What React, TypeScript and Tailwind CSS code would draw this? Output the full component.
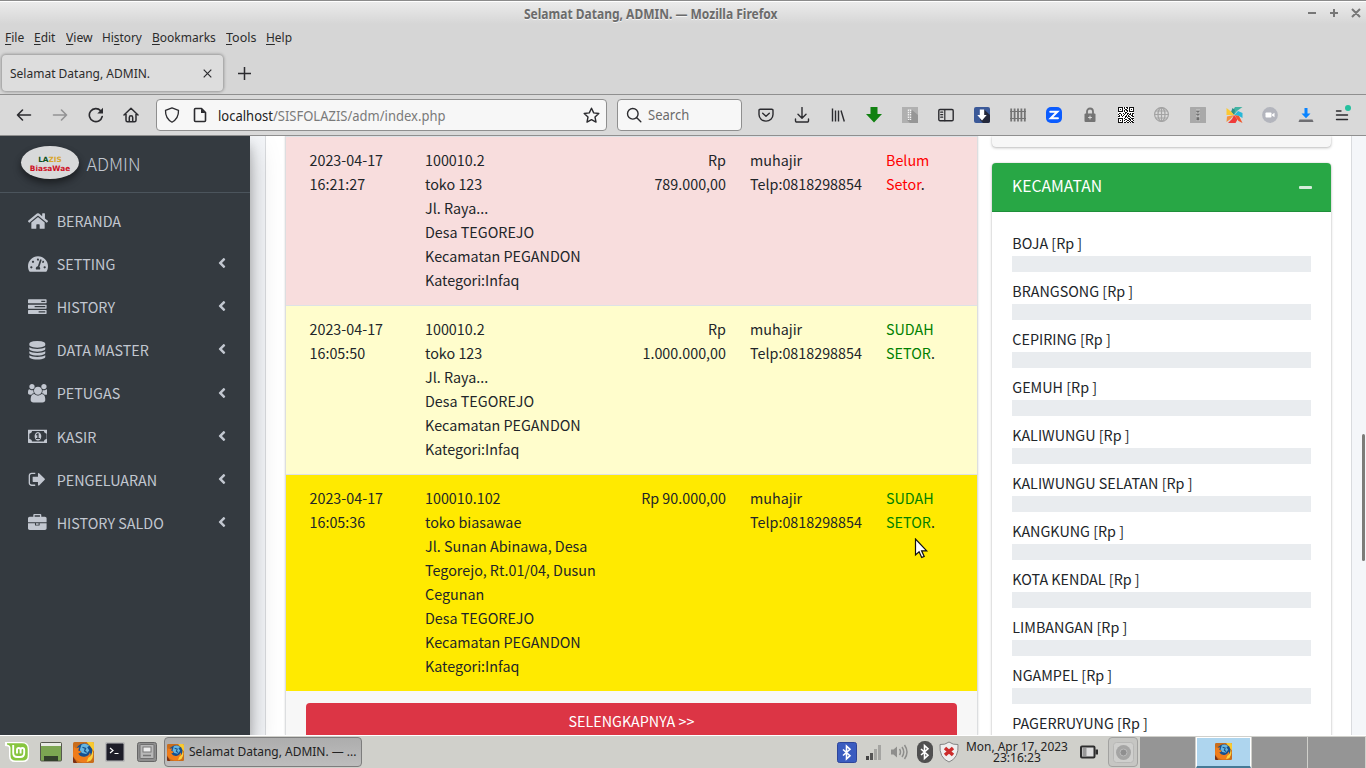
import { useLayoutEffect, useRef, useState, type ReactNode } from 'react';
import { FaHome, FaTachometerAlt, FaAngleLeft } from 'react-icons/fa';

/* Text of the desktop theme, condensed to a given width. */
function Label({ w, className = '', children }: { w: number; className?: string; children: ReactNode }) {
  const ref = useRef<HTMLSpanElement>(null);
  const [k, setK] = useState(1);
  useLayoutEffect(() => {
    if (ref.current) setK(w / ref.current.offsetWidth);
  }, [w]);
  return (
    <span className={'block whitespace-nowrap ' + className} style={{ width: w }}>
      <span ref={ref} className="inline-block origin-left" style={{ transform: `scaleX(${k})` }}>
        {children}
      </span>
    </span>
  );
}

const FA4: Record<string, { w: number; d: string }> = {
  tasks: { w: 1792, d: 'M1024 1408h640v-128h-640v128zm-384-512h1024v-128h-1024v128zm640-512h384v-128h-384v128zm512 832v256q0 26-19 45t-45 19h-1664q-26 0-45-19t-19-45v-256q0-26 19-45t45-19h1664q26 0 45 19t19 45zm0-512v256q0 26-19 45t-45 19h-1664q-26 0-45-19t-19-45v-256q0-26 19-45t45-19h1664q26 0 45 19t19 45zm0-512v256q0 26-19 45t-45 19h-1664q-26 0-45-19t-19-45v-256q0-26 19-45t45-19h1664q26 0 45 19t19 45z' },
  database: { w: 1792, d: 'M896 768q237 0 443-43t325-127v170q0 69-103 128t-280 93.5-385 34.5-385-34.5-280-93.5-103-128v-170q119 84 325 127t443 43zm0 768q237 0 443-43t325-127v170q0 69-103 128t-280 93.5-385 34.5-385-34.5-280-93.5-103-128v-170q119 84 325 127t443 43zm0-384q237 0 443-43t325-127v170q0 69-103 128t-280 93.5-385 34.5-385-34.5-280-93.5-103-128v-170q119 84 325 127t443 43zm0-1152q208 0 385 34.5t280 93.5 103 128v128q0 69-103 128t-280 93.5-385 34.5-385-34.5-280-93.5-103-128v-128q0-69 103-128t280-93.5 385-34.5z' },
  users: { w: 1920, d: 'M593 896q-162 5-265 128h-134q-82 0-138-40.5t-56-118.5q0-353 124-353 6 0 43.5 21t97.5 42.5 119 21.5q67 0 133-23-5 37-5 66 0 139 81 256zm1071 637q0 120-73 189.5t-194 69.5h-874q-121 0-194-69.5t-73-189.5q0-53 3.5-103.5t14-109 26.5-108.5 43-97.5 62-81 85.5-53.5 111.5-20q10 0 43 21.5t73 48 107 48 135 21.5 135-21.5 107-48 73-48 43-21.5q61 0 111.5 20t85.5 53.5 62 81 43 97.5 26.5 108.5 14 109 3.5 103.5zm-1024-1277q0 106-75 181t-181 75-181-75-75-181 75-181 181-75 181 75 75 181zm704 384q0 159-112.5 271.5t-271.5 112.5-271.5-112.5-112.5-271.5 112.5-271.5 271.5-112.5 271.5 112.5 112.5 271.5zm576 225q0 78-56 118.5t-138 40.5h-134q-103-123-265-128 81-117 81-256 0-29-5-66 66 23 133 23 59 0 119-21.5t97.5-42.5 43.5-21q124 0 124 353zm-128-609q0 106-75 181t-181 75-181-75-75-181 75-181 181-75 181 75 75 181z' },
  money: { w: 1920, d: 'M768 1152h384v-96h-128v-448h-114l-148 137 77 80q42-37 55-57h2v288h-128v96zm512-256q0 70-21 142t-59.5 134-101.5 101-138 39-138-39-101.5-101-59.5-134-21-142 21-142 59.5-134 101.5-101 138-39 138 39 101.5 101 59.5 134 21 142zm512 256v-512q-106 0-181-75t-75-181h-1152q0 106-75 181t-181 75v512q106 0 181 75t75 181h1152q0-106 75-181t181-75zm128-832v1152q0 26-19 45t-45 19h-1792q-26 0-45-19t-19-45v-1152q0-26 19-45t45-19h1792q26 0 45 19t19 45z' },
  signout: { w: 1792, d: 'M704 1440q0 4 1 20t.5 26.5-3 23.5-10 19.5-20.5 6.5h-320q-119 0-203.5-84.5t-84.5-203.5v-704q0-119 84.5-203.5t203.5-84.5h320q13 0 22.5 9.5t9.5 22.5q0 4 1 20t.5 26.5-3 23.5-10 19.5-20.5 6.5h-320q-66 0-113 47t-47 113v704q0 66 47 113t113 47h312l11.5 1 11.5 3 8 5.5 7 9 2 13.5zm928-544q0 26-19 45l-544 544q-19 19-45 19t-45-19-19-45v-288h-448q-26 0-45-19t-19-45v-384q0-26 19-45t45-19h448v-288q0-26 19-45t45-19 45 19l544 544q19 19 19 45z' },
  briefcase: { w: 1792, d: 'M640 256h512v-128h-512v128zm1152 640v480q0 66-47 113t-113 47h-1472q-66 0-113-47t-47-113v-480h672v160q0 26 19 45t45 19h320q26 0 45-19t19-45v-160h672zm-768 0v128h-256v-128h256zm768-480v384h-1792v-384q0-66 47-113t113-47h352v-160q0-40 28-68t68-28h576q40 0 68 28t28 68v160h352q66 0 113 47t47 113z' },
};

function Fa4({ name }: { name: string }) {
  const { w, d } = FA4[name];
  return (
    <svg viewBox={`0 0 ${w} 1792`} fill="currentColor" width={(w / 1792) * 18.6} height={18.6}>
      <path d={d} />
    </svg>
  );
}

const MENU: [string, string, number][] = [
  ['', 'File', 19], ['', 'Edit', 21.5], ['', 'View', 26.5], ['Hi', 'story', 40], ['', 'Bookmarks', 64], ['', 'Tools', 30], ['', 'Help', 26],
];

const NAV: { label: string; icon: ReactNode; open?: boolean }[] = [
  { label: 'BERANDA', icon: <FaHome className="size-5" />, open: true },
  { label: 'SETTING', icon: <FaTachometerAlt className="size-5" /> },
  { label: 'HISTORY', icon: <Fa4 name="tasks" /> },
  { label: 'DATA MASTER', icon: <Fa4 name="database" /> },
  { label: 'PETUGAS', icon: <Fa4 name="users" /> },
  { label: 'KASIR', icon: <Fa4 name="money" /> },
  { label: 'PENGELUARAN', icon: <Fa4 name="signout" /> },
  { label: 'HISTORY SALDO', icon: <Fa4 name="briefcase" /> },
];

const ROWS = [
  { bg: 'bg-[#f8dddd]', time: '16:21:27', lines: ['100010.2', 'toko 123', 'Jl. Raya...', 'Desa TEGOREJO', 'Kecamatan PEGANDON', 'Kategori:Infaq'], rp: ['Rp', '789.000,00'], status: ['Belum', 'Setor'], color: 'text-[#ff0000]' },
  { bg: 'bg-[#fffdcc]', time: '16:05:50', lines: ['100010.2', 'toko 123', 'Jl. Raya...', 'Desa TEGOREJO', 'Kecamatan PEGANDON', 'Kategori:Infaq'], rp: ['Rp', '1.000.000,00'], status: ['SUDAH', 'SETOR'], color: 'text-[#008000]' },
  { bg: 'bg-[#ffea00]', time: '16:05:36', lines: ['100010.102', 'toko biasawae', 'Jl. Sunan Abinawa, Desa', 'Tegorejo, Rt.01/04, Dusun', 'Cegunan', 'Desa TEGOREJO', 'Kecamatan PEGANDON', 'Kategori:Infaq'], rp: ['Rp 90.000,00'], status: ['SUDAH', 'SETOR'], color: 'text-[#008000]' },
];

const KECAMATAN = ['BOJA', 'BRANGSONG', 'CEPIRING', 'GEMUH', 'KALIWUNGU', 'KALIWUNGU SELATAN', 'KANGKUNG', 'KOTA KENDAL', 'LIMBANGAN', 'NGAMPEL', 'PAGERRUYUNG'];

function S({ children, size = 16, className = '' }: { children: ReactNode; size?: number; className?: string }) {
  return (
    <svg width={size} height={size} viewBox={`0 0 ${size} ${size}`} fill="none" stroke="#2b2b2f" strokeWidth="1.4" strokeLinecap="round" strokeLinejoin="round" className={className}>
      {children}
    </svg>
  );
}

const QR = ['1111101011011111', '1000101001010001', '1010100110010101', '1000101011010001', '1111101001011111', '0000000110000000', '0110010101101011', '1001001001011010', '0101010010100110', '1100100110110011', '0000000101001000', '1111101000110111', '1000100110011010', '1010101001101001', '1000100010010110', '1111101101101011'];

const EXT: ReactNode[] = [
  <S><path d="M2.2 2.2h11.600a1.200 1.200 0 0 1 1.200 1.200v4.100a7 6.600 0 0 1-14 0v-4.100a1.200 1.200 0 0 1 1.200-1.200z" /><path d="M4.700 6.200 8 9.300l3.300-3.100" /></S>,
  <S><path d="M8 .5v10.500M4 7.300 8 11.300l4-4M1.500 12v1.800a1.200 1.200 0 0 0 1.200 1.200h10.600a1.200 1.200 0 0 0 1.200-1.200V12" /></S>,
  <S><path d="M2.500 1.500v13M5.500 3.500v11M8.500 3.500v11M11 3.500l3.300 11" strokeLinecap="butt" /></S>,
  <S><path d="M4.500 0h7v7H16l-8 8.500L0 7h4.500z" fill="#118111" stroke="none" /></S>,
  <S><path d="M0 0h16v16H0z" fill="#b0b0b0" stroke="none" /><path d="m10 3 6 5v8H8l-3-3z" fill="#969696" stroke="none" /><path d="M7.500 2.500v10.500" stroke="#f2f2f2" strokeWidth="3.400" strokeLinecap="butt" strokeDasharray="1.500 .8" /><path d="M7.500 2.500v10.500" stroke="#b0b0b0" strokeWidth=".8" strokeLinecap="butt" /></S>,
  <S><rect x=".8" y="2.500" width="14.400" height="11.200" rx="1.200" /><path d="M6.800 2.500v11.200M2.700 5.200h2M2.700 7.700h2M2.700 10.200h2" strokeWidth="1.200" /></S>,
  <S><rect width="16" height="16" rx="2" fill="#3b5998" stroke="none" /><path d="M10.200 2.500 16 8v6q0 2-2 2H9l-3-3z" fill="#24283a" stroke="none" /><path d="M5.800 2.500h4.400V8h2.500L8 13.500 3.300 8h2.500z" fill="#fff" stroke="none" /></S>,
  <S><path d="M1.200 1.500v13M4.600 1.500v13M8 1.500v13M11.400 1.500v13M14.800 1.500v13" stroke="#747474" strokeWidth="1.800" strokeLinecap="butt" /><path d="M0 4.500h16M0 11.500h16" stroke="#747474" strokeWidth="1" /></S>,
  <S><rect width="16" height="16" rx="5" fill="#0b5cff" stroke="none" /><path d="M4.300 4.700h7L4.800 11.300h7.100" stroke="#fff" strokeWidth="2.100" strokeLinejoin="miter" /></S>,
  <S><path d="M5 7V4.500a3 3 0 0 1 6 0V7" stroke="#747474" strokeWidth="1.800" /><rect x="2.500" y="6.500" width="11" height="8.500" rx="1" fill="#747474" stroke="none" /><path d="M8 9v3M6.500 10.500h3" stroke="#d8d8d8" strokeWidth="1" /></S>,
  <S><rect width="16" height="16" fill="#fff" stroke="none" />{QR.map((r, y) => r.split('').map((c, x) => (c === '1' ? <rect key={x + '-' + y} x={x} y={y} width="1" height="1" fill="#111" stroke="none" /> : null)))}</S>,
  <S><g stroke="#a3a3a3" strokeWidth="1.200"><circle cx="7.500" cy="7.500" r="6.900" /><ellipse cx="7.500" cy="7.500" rx="3.500" ry="6.900" /><path d="M7.500.5v14M.5 7.500h14M1.700 4h11.600M1.700 11h11.600" /></g></S>,
  <S><rect width="16" height="16" rx=".5" fill="#a9a9a9" stroke="none" /><path d="M8 2v12" stroke="#bcbcbc" strokeWidth="4" strokeLinecap="butt" /><path d="M6.500 4h3L8 5.500zM6.500 7h3L8 8.500zM7 10.500h2v2.500H7z" fill="#6d6d6d" stroke="#6d6d6d" strokeWidth=".5" /></S>,
  <S size={17}><g stroke="none"><path d="M8 8 6.500 4 9 0h7.500L11 4z" fill="#41b3a3" /><path d="M8 8 5 5l1.500-4L9 3z" fill="#2f8f87" /><path d="m8.500 8 3.500-4 4.500 2v5L13 9z" fill="#27b8d8" /><path d="m8.500 8 4.500 1 3.500 7-4-2z" fill="#f0562b" /><path d="m8 8 3.500 4.500L9.500 16H2l4-4z" fill="#ef3b3a" /><path d="M8 8 1 9.500.5 15l4-3z" fill="#f6913d" /><path d="M8 8 .5 8V1L5 4.500z" fill="#fbc933" /></g></S>,
  <S><circle cx="8" cy="8" r="7.900" fill="#b3b5bd" stroke="none" /><rect x="3.500" y="5.500" width="6" height="5" rx=".8" fill="#fff" stroke="none" /><path d="m10 7.500 2.500-1.800v4.600L10 8.500z" fill="#fff" stroke="none" /></S>,
  <S><path d="M6.500 1h3v5.500h3L8 11.300 3.500 6.500h3z" fill="#0a84ff" stroke="none" /><path d="M1.500 12.500h13l1 2.500H.5z" fill="#6e6e72" stroke="none" /></S>,
  <span className="relative block"><S><path d="M2.500 4h4.500M2.500 8h11M2.500 12.500h11" /></S><span className="absolute -top-[2px] left-[11px] size-[6px] rounded-full bg-[#25c19f]" /></span>,
];

function Firefox({ size }: { size: number }) {
  return (
    <svg width={size} height={size} viewBox="0 0 20 20">
      <rect width="20" height="20" rx="1.500" fill="#c96d1c" />
      <path d="M13 0h5.500A1.500 1.500 0 0 1 20 1.500V9z" fill="#f8c930" />
      <circle cx="10.500" cy="9.500" r="8" fill="#16508f" />
      <path d="M8 2.500q4-2 7.500 1l-2 1.500 2 3-3 3.500-4-1-2-3z" fill="#65b5e0" />
      <path d="M9 5l3 1-1 2.500 2 1.500" stroke="#174f8a" strokeWidth="1.200" fill="none" />
      <path d="M1 4q.5 2 2 2l3-1-1 3 3 1q-1 2-3 2 2 3.500 6 3t5-4q1.500 2 .5 4.500Q19 12 18.500 7q2 7-2 10.500T6 18.500 0 11z" fill="#ef7d1b" />
      <path d="M14.500 15q4-2.500 4-7.500 2 6-1.500 10l-4 1.500z" fill="#fbd23c" />
      <path d="m0 14 4 6H1.500A1.500 1.500 0 0 1 0 18.500z" fill="#7b2f13" />
    </svg>
  );
}

const BT = 'M3.500 5 10.500 11.200 7 14.500V1.500l3.500 3.300L3.500 11';

export default function App() {
  return (
    <div className="flex h-[768px] w-[1366px] flex-col overflow-hidden bg-[#d6d6d6] font-['Noto_Sans',sans-serif] text-[13.33px] leading-5 text-[#2b2b2b]">
      {/* Title bar */}
      <header className="flex h-6 shrink-0 items-center border-t border-[#8b8b8b] bg-gradient-to-b from-[#ececec] to-[#d6d6d6] shadow-[inset_0_1px_0_#fff]">
        <div className="flex flex-1 justify-end">
          <div className="w-[842px] pt-[2px]"><Label w={254} className="font-bold text-[#6b6b6b] [text-shadow:0_1px_0_#f4f4f4]">Selamat Datang, ADMIN. — Mozilla Firefox</Label></div>
        </div>
        <svg className="absolute top-[5px] left-[1304px]" width="60" height="16" fill="none" stroke="#777" strokeWidth="2"><path d="M4 8h8M26 8h8M30 4v8M48 4l8 8M56 4l-8 8" /></svg>
      </header>
      <nav className="flex h-[27px] shrink-0 items-center gap-[10px] pb-[2px] pl-[5px]">
        {MENU.map(([pre, word, w]) => (
          <Label key={word} w={w}>
            {pre}<span className="underline decoration-1 underline-offset-[2px]">{word[0]}</span>{word.slice(1)}
          </Label>
        ))}
      </nav>
      <div className="flex h-[43px] shrink-0 items-center pl-[2px] pt-1">
        <div className="mb-[3px] flex h-9 w-[221px] items-center justify-between rounded bg-[#dddddd] pr-[11px] pl-2 shadow-[0_0_3px_1px_rgba(0,0,0,0.3)]">
          <Label w={140.5}>Selamat Datang, ADMIN.</Label>
          <svg width="9" height="9" stroke="#2b2b2f" strokeWidth="1.200"><path d="M.7.7l7.600 7.600M8.300.7.7 8.300" /></svg>
        </div>
        <svg className="mb-[2px] ml-[15px]" width="13" height="13" stroke="#2b2b2f" strokeWidth="1.500"><path d="M6.500 0v13M0 6.500h13" /></svg>
      </div>
      {/* Toolbar */}
      <div className="flex h-[42px] shrink-0 items-center border-y border-[#8f8f8f] bg-[#d9d9d9]">
        <div className="flex w-[156px] items-center gap-5 pl-4">
          <S><path d="M14.500 8H1.500M6.500 3 1.500 8l5 5" strokeWidth="1.600" /></S>
          <S className="opacity-40"><path d="M1.500 8h13M9.500 3l5 5-5 5" strokeWidth="1.600" /></S>
          <S><path d="M14.200 9.500A6.500 6.500 0 1 1 12.700 3.800" strokeWidth="1.600" /><path d="M15 .8v5.700H9.300z" fill="#2b2b2f" stroke="none" /></S>
          <S className="-ml-[1px]"><path d="M1 8 8 1.300 15 8M3 7v6.300a1.500 1.500 0 0 0 1.500 1.500h7A1.500 1.500 0 0 0 13 13.300V7M6.300 14.500v-4a1.700 1.700 0 0 1 3.400 0v4" strokeWidth="1.500" /></S>
        </div>
        <div className="flex h-8 w-[451px] items-center rounded border border-[#8f8f8f] bg-[#f7f7f7] px-[7px]">
          <S><path d="M8 .9 14.500 3.300q.3 8.200-6.500 11.900Q1.200 11.500 1.500 3.300z" strokeWidth="1.300" /></S>
          <S className="ml-3"><path d="M3.500 1.500h6L13.500 5.500v8a1 1 0 0 1-1 1h-9a1 1 0 0 1-1-1v-11a1 1 0 0 1 1-1z" strokeWidth="1.600" /><path d="M9 1.500v4.500h4.500z" fill="#2b2b2f" stroke="none" /></S>
          <div className="ml-[10px] flex-1 pb-[1px]"><Label w={227.5} className="text-[14.7px] text-[#7a7a7a]"><span className="text-[#222]">localhost</span>/SISFOLAZIS/adm/index.php</Label></div>
          <S size={17} className="-mr-[1px]"><path d="m8.500 1.200 2.200 4.700 5.100.6-3.800 3.500 1 5.100-4.500-2.500L4 15.100l1-5.100L1.200 6.500l5.100-.6z" /></S>
        </div>
        <div className="ml-[10px] flex h-8 w-[125px] items-center rounded border border-[#8f8f8f] bg-[#f7f7f7] pl-2">
          <S><circle cx="6.800" cy="6.800" r="5.300" /><path d="m10.800 10.800 4 4" /></S>
          <Label w={41} className="ml-[6px] text-[14.3px] text-[#6b6b6b]">Search</Label>
        </div>
        <div className="ml-[6px] flex">
          {EXT.map((icon, i) => (
            <div key={i} className="flex h-8 w-9 items-center justify-center">{icon}</div>
          ))}
        </div>
      </div>

      {/* Page */}
      <div className="flex h-[599px] shrink-0 overflow-hidden bg-[#f4f6f9] font-['Noto_Sans_CJK_SC',sans-serif] text-[14.33px] leading-6 text-[#212529]">
        <aside className="z-10 w-[250px] shrink-0 bg-[#343a40] text-[#c2c7d0] shadow-[0_14px_28px_rgba(0,0,0,0.25),0_10px_10px_rgba(0,0,0,0.22)]">
          <div className="flex h-[57px] items-center border-b border-[#4b545c] pl-[21px]">
            <div className="-mt-[3px] flex h-[33px] w-[58px] flex-col items-center justify-center rounded-[50%] bg-[#d8d9da] pt-[3px] font-['DejaVu_Sans',sans-serif] text-[7.300px] leading-[9px] font-bold shadow-[0_3px_6px_rgba(0,0,0,0.3),0_5px_8px_rgba(0,0,0,0.25)]">
              <span><span className="text-[#0d5022]">LA</span><span className="text-[#d9a62b]">ZIS</span></span>
              <span className="text-[7.400px] text-[#cf1126]">BiasaWae</span>
            </div>
            <span className="ml-[7.500px] pb-[2px] text-[17.900px] font-light">ADMIN</span>
          </div>
          <ul className="pt-[7.650px]">
            {NAV.map((n) => (
              <li key={n.label} className="mb-[3.200px] flex h-10 items-center">
                <span className="ml-[25px] flex w-[25px] justify-center">{n.icon}</span>
                <span className="ml-[6.700px] flex-1">{n.label}</span>
                {!n.open && <FaAngleLeft className="mr-[20px] mb-[1.500px] size-4" />}
              </li>
            ))}
          </ul>
        </aside>
        <main className="ml-[15px] flex w-[1087px] shrink-0 border-x border-[#d9dbde] bg-white">
          <section className="ml-[19px] flex w-[693px] flex-col border-x border-[#dcdee0] bg-[#f7f7f7] shadow-[0_0_2px_rgba(0,0,0,0.15)]">
            {ROWS.map((r) => (
              <div key={r.time} className={'grid grid-cols-[127px_213px_112px_136px_103px] border-t border-[#dee2e6] pt-[11px] pb-[13px] ' + r.bg}>
                <div className="pl-[23.500px]"><p>2023-04-17</p><p>{r.time}</p></div>
                <div className="pl-3">{r.lines.map((l) => <p key={l} className="whitespace-nowrap">{l}</p>)}</div>
                <div className="pr-3 text-right whitespace-nowrap">{r.rp.map((l) => <p key={l}>{l}</p>)}</div>
                <div className="pl-3"><p>muhajir</p><p>Telp:0818298854</p></div>
                <div className={'pl-3 ' + r.color}><p>{r.status[0]}</p><p>{r.status[1]}<span className="text-[#212529]">.</span></p></div>
              </div>
            ))}
            <button className="mx-5 mt-3 h-[38px] shrink-0 rounded bg-[#dc3545] pb-[2px] text-white">SELENGKAPNYA &gt;&gt;</button>
          </section>
          <section className="ml-[14px] w-[339px]">
            <div className="h-[11px] rounded-b bg-[#f7f7f7] shadow-[0_0_1px_rgba(0,0,0,0.2),0_1px_3px_rgba(0,0,0,0.25)]" />
            <div className="mt-4 h-[620px] rounded shadow-[0_0_1px_rgba(0,0,0,0.3),0_1px_3px_rgba(0,0,0,0.25)]">
              <div className="flex h-[49px] items-center justify-between rounded-t border-b border-[#1f8f3a] bg-[#28a745] pr-[19px] pb-[2px] pl-[20px] text-white">
                <h3 className="text-[15.760px]">KECAMATAN</h3>
                <span className="mt-[3px] h-[3px] w-[13px] rounded-[1px] bg-[#d4edda]" />
              </div>
              <div className="px-5 pt-[19px]">
                {KECAMATAN.map((k) => (
                  <div key={k} className="mb-[7px]"><p className="mb-px pl-[.3px]">{k} [Rp ]</p><div className="h-4 bg-[#e9ecef]" /></div>
                ))}
              </div>
            </div>
          </section>
        </main>
        <div className="flex-1 pt-[298px] pl-[10px]"><div className="h-[127px] w-[3px] rounded-full bg-[#7c7c78]" /></div>
      </div>

      {/* Panel */}
      <footer className="flex h-[33px] shrink-0 items-center border-t border-white bg-[#d0d0cb]">
        <div className="ml-[5px] flex items-center gap-[11px]">
          <svg width="24" height="22" viewBox="0 0 24 22"><path d="M0 1h17q7 0 7 7v7q0 6-6 6h-8q-6 0-6-6V7q0-2-4-2z" fill="#fff" /><path d="M2 2.300h15q5.700 0 5.700 5.700v6.500q0 5-5 5h-7q-5.200 0-5.200-5V7q0-3-3.500-3.500z" fill="#87c53f" /><path d="M8.200 4v8q0 4 4 4h3q4 0 4-4V9q0-2-1.800-2t-1.800 2v3.500M15.600 9q0-2-1.800-2T12 9v3.500" fill="none" stroke="#fff" strokeWidth="1.900" /></svg>
          <svg width="22" height="20"><rect x=".5" y=".5" width="21" height="18.500" rx="1" fill="#7ca652" stroke="#56584f" /><path d="M1 1h20v3H1z" fill="#e8eae4" /><path d="M4 14h14v5H4z" fill="#33402c" /></svg>
          <div><Firefox size={21} /></div>
          <svg width="20" height="20"><rect x=".7" y=".7" width="18.600" height="18.600" rx="1.500" fill="#1d1d28" stroke="#b9b9b9" strokeWidth="1.500" /><path d="m5 6 3 2.500L5 11M9.500 11.500h4" stroke="#fff" strokeWidth="1.200" fill="none" /></svg>
          <svg width="20" height="20" className="ml-[1px]"><rect x=".5" y=".5" width="19" height="19" rx="2" fill="#8e8e8e" stroke="#666" /><rect x="3" y="2.500" width="14" height="14" rx="1" fill="#b8b8b8" stroke="#707070" /><rect x="6" y="5" width="8" height="5" fill="#eee" stroke="#777" /><path d="M6 13.500h8" stroke="#777" strokeWidth="1.500" /></svg>
        </div>
        <div className="ml-[7px] flex h-[30px] w-[198px] items-center rounded border border-[#7d7d7d] bg-gradient-to-b from-[#adadad] to-[#bdbdbd] pl-[2px]">
          <Firefox size={17} />
          <div className="pb-[2px]"><Label w={167} className="ml-[5px] text-[#222]">Selamat Datang, ADMIN. — ...</Label></div>
        </div>
        <div className="ml-[475px] flex items-center">
          <svg width="20" height="21"><rect x=".5" y=".5" width="19" height="20" rx="2" fill="#3a5cc0" stroke="#2d459a" /><path d={BT} transform="translate(2.500 2.500)" fill="none" stroke="#fff" strokeWidth="1.600" /></svg>
          <svg width="16" height="15" className="ml-[9px]"><path d="M0 11h3v4H0z" fill="#444" /><path d="M4 8h3v7H4z" fill="#555" /><path d="M8 4h3v11H8zM12 0h3v15h-3z" fill="#a5a5a2" /></svg>
          <svg width="19" height="18" className="ml-[8px]" fill="none" stroke="#8e8e8c" strokeWidth="1.500"><path d="M1 6.500h2.500L7 3.500v11l-3.500-3H1z" fill="#8e8e8c" stroke="none" /><path d="M9.500 6q2 3 0 6M12 4q3.500 5 0 10M14.500 2q5 7 0 14" /></svg>
          <svg width="16" height="22" className="ml-[8px]"><rect width="16" height="22" rx="7.500" fill="#505050" /><path d={BT} transform="translate(.5 3)" fill="none" stroke="#fff" strokeWidth="1.600" /></svg>
          <svg width="20" height="22" className="ml-[6px]"><path d="M10 1q4 3 9 2.500Q20 17 10 21 0 17 1 3.500 6 4 10 1z" fill="#eee" stroke="#848484" /><path d="m6 7 8 7M14 7l-8 7" stroke="#cc2c2c" strokeWidth="3.500" /></svg>
        </div>
        <div className="ml-[6px] flex w-[103px] flex-col items-center text-[13.330px] leading-[11px] text-[#222]">
          <Label w={102}>Mon, Apr 17, 2023</Label>
          <Label w={48}>23:16:23</Label>
        </div>
        <svg width="18" height="14" className="ml-[12px]"><rect x="1" y="1.500" width="13.500" height="11" rx="1" fill="#ddd" stroke="#2e2e2e" strokeWidth="2" /><path d="M2.500 3h4v8h-4z" fill="#999" /><path d="M15.500 4.500H18v5h-2.500z" fill="#2e2e2e" /></svg>
        <div className="ml-[10px] flex size-[30px] items-center justify-center rounded border border-[#a2a2a0] bg-[#c6c6c3]">
          <svg width="21" height="21"><rect x=".5" y=".5" width="20" height="20" rx="3" fill="#cfcfcd" stroke="#b8b8b6" /><circle cx="10.500" cy="10.500" r="7.500" fill="#a5a5a4" /><circle cx="10.500" cy="10.500" r="3.500" fill="#8f8f8f" stroke="#bcbcbc" /></svg>
        </div>
        <div className="ml-[2px] grid h-[31px] shrink-0 grid-cols-[55px_55px_55px_57px] gap-px">
          <div className="bg-[#959595]" />
          <div className="flex items-center justify-center border border-b-2 border-white border-b-[#467a96] bg-[#aed5ee]"><Firefox size={17} /></div>
          <div className="bg-[#959595]" />
          <div className="bg-[#959595]" />
        </div>
      </footer>

      <svg className="absolute top-[538px] left-[914px]" width="15" height="21" viewBox="0 0 15 21"><path d="M1.500 1v16l3.600-3.300 2.600 5.800 2.500-1.100-2.600-5.600h5.100z" fill="#fff" stroke="#111" strokeWidth="1.200" /></svg>
    </div>
  );
}
